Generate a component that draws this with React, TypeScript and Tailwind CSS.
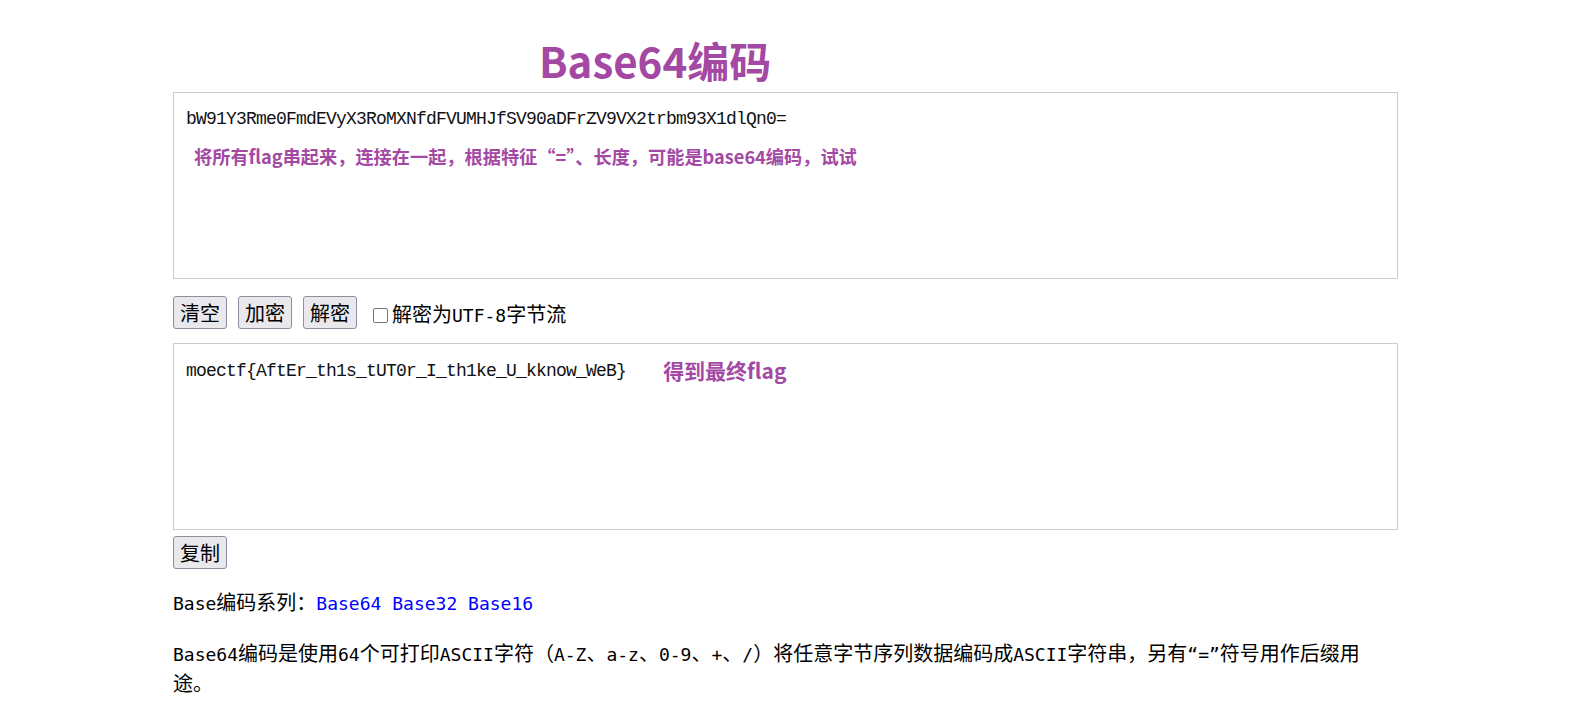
import React from 'react';

const purple = 'text-[#a349a4]';

// latin runs are set in a mono face a bit smaller than the CJK text
const L: React.FC<{ children: React.ReactNode; className?: string }> = ({ children, className = '' }) => (
  <span className={`font-['DejaVu_Sans_Mono',monospace] text-[18px] ${className}`}>{children}</span>
);

const Btn: React.FC<{ children: React.ReactNode }> = ({ children }) => (
  <button
    type="button"
    className="rounded-[3px] border border-[#8f8f9d] bg-[#e9e9ed] px-[6px] py-[1px] text-[20px] leading-[29px] text-black"
  >
    {children}
  </button>
);

const Box: React.FC<{ children: React.ReactNode; className?: string }> = ({ children, className = '' }) => (
  <div className={`border border-[#cccccc] bg-white pl-[12px] ${className}`}>{children}</div>
);

const mono = "font-['Liberation_Mono',monospace] text-[18px] tracking-[-0.8px] leading-[24px] text-[#111]";

export default function App() {
  return (
    <div className="min-h-screen bg-white font-['Noto_Sans_CJK_SC',sans-serif] text-black">
      <div className="ml-[173px] w-[1225px] pt-[39px] pb-[30px]">
        <h1 className={`ml-[366px] text-[42px] font-bold leading-none ${purple}`}>Base64编码</h1>

        <Box className="mt-[11px] h-[187px] pt-[14px]">
          <div className={mono}>bW91Y3Rme0FmdEVyX3RoMXNfdFVUMHJfSV90aDFrZV9VX2trbm93X1dlQn0=</div>
          <div className={`ml-[8px] mt-[12px] text-[18.2px] font-bold leading-[27px] ${purple}`}>
            将所有flag串起来，连接在一起，根据特征“=”、长度，可能是base64编码，试试
          </div>
        </Box>

        <div className="mt-[16px] flex items-center">
          <Btn>清空</Btn>
          <div className="ml-[11px]"><Btn>加密</Btn></div>
          <div className="ml-[11px]"><Btn>解密</Btn></div>
          <label className="ml-[16px] mt-[5px] flex items-center text-[20px] leading-[28px]">
            <span className="h-[15px] w-[15px] rounded-[2px] border-[1.5px] border-[#767676] bg-white" />
            <span className="ml-[4px]">
              解密为<L>UTF-8</L>字节流
            </span>
          </label>
        </div>

        <Box className="mt-[13px] flex h-[187px] items-start pt-[11px]">
          <div className="flex items-center">
            <span className={mono}>moectf{'{'}AftEr_th1s_tUT0r_I_th1ke_U_kknow_WeB{'}'}</span>
            <span className={`ml-[37px] text-[21px] font-bold ${purple}`}>得到最终flag</span>
          </div>
        </Box>

        <div className="mt-[6px]">
          <Btn>复制</Btn>
        </div>

        <p className="mt-[19px] text-[20px] leading-[28px]">
          <L>Base</L>编码系列：
          <L className="text-[#0000ff]">Base64</L>
          <L> </L>
          <L className="text-[#0000ff]">Base32</L>
          <L> </L>
          <L className="text-[#0000ff]">Base16</L>
        </p>

        <p className="mt-[21px] text-[20px] leading-[28px]">
          <L>Base64</L>编码是使用<L>64</L>个可打印<L>ASCII</L>字符（<L>A-Z</L>、<L>a-z</L>、<L>0-9</L>、<L>+</L>、<L>/</L>）将任意字节序列数据编码成<L>ASCII</L>字符串，另有<L>“=”</L>符号用作后缀用途。
        </p>
      </div>
    </div>
  );
}
